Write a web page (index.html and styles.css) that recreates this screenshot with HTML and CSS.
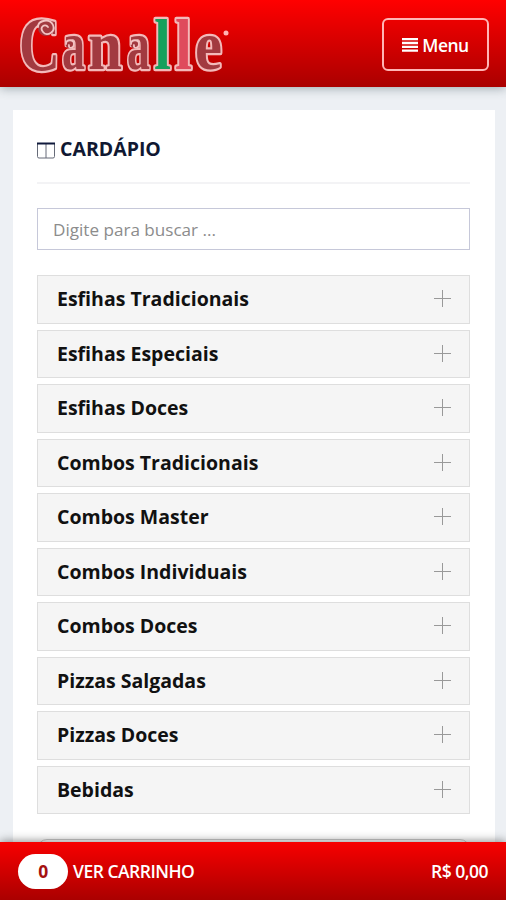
FILE: index.html
```
<!DOCTYPE html>
<html lang="pt-BR">
<head>
    <meta charset="UTF-8">
    <meta name="viewport" content="width=device-width, initial-scale=1.0">
    <title>Canalle - Cardápio</title>
    <link rel="stylesheet" href="styles.css">
</head>
<body>
    <header class="topbar">
        <svg class="logo" width="220" height="87" viewBox="0 0 220 87" role="img" aria-label="Canalle">
            <g class="logo-letters">
                <text x="4" y="70" font-size="77" textLength="41" lengthAdjust="spacingAndGlyphs">C</text>
                <text x="47" y="69" font-size="70" textLength="23" lengthAdjust="spacingAndGlyphs">a</text>
                <text x="73" y="69" font-size="70" textLength="34" lengthAdjust="spacingAndGlyphs">n</text>
                <text x="112" y="69" font-size="70" textLength="23" lengthAdjust="spacingAndGlyphs">a</text>
                <text class="green" x="139" y="69" font-size="71" textLength="17" lengthAdjust="spacingAndGlyphs">l</text>
                <text class="rose" x="160" y="69" font-size="71" textLength="17" lengthAdjust="spacingAndGlyphs">l</text>
                <text x="180" y="69" font-size="70" textLength="27" lengthAdjust="spacingAndGlyphs">e</text>
            </g>
            <!-- curls over the letters -->
            <g fill="none" stroke-linecap="round">
                <g class="curl-base">
                    <circle cx="31" cy="28" r="8"/>
                    <circle cx="55" cy="44" r="4.500"/>
                    <circle cx="120" cy="44" r="4.500"/>
                </g>
                <g class="curl">
                    <path d="M23 27c0-7 12-9 15-2s-6 12-10 7 2-9 5-5"/>
                    <path d="M51 44c0-5 8-5 8 0s-6 5-5 1"/>
                    <path d="M116 44c0-5 8-5 8 0s-6 5-5 1"/>
                </g>
            </g>
            <circle cx="211" cy="33" r="2.500" fill="#ffb3b3"/>
        </svg>
        <button class="menu-btn">
            <svg width="16" height="14" viewBox="0 0 16 14"><path d="M0 1.200h16M0 5h16M0 8.800h16M0 12.600h16" stroke="#fff" stroke-width="2.300"/></svg>
            Menu
        </button>
    </header>

    <main class="card">
        <h1 class="title">
            <svg width="18" height="17" viewBox="0 0 18 17"><path d="M.5 1v13.500q0 1.500 1.500 1.500h14q1.500 0 1.500-1.500V1M9 1v15" fill="none" stroke="#666b78"/><path d="M0 1.500h18" stroke="#101a3c" stroke-width="2"/></svg>
            CARDÁPIO
        </h1>
        <input class="search" type="text" placeholder="Digite para buscar ...">
        <ul class="categories">
            <li>Esfihas Tradicionais</li>
            <li>Esfihas Especiais</li>
            <li>Esfihas Doces</li>
            <li>Combos Tradicionais</li>
            <li>Combos Master</li>
            <li>Combos Individuais</li>
            <li>Combos Doces</li>
            <li>Pizzas Salgadas</li>
            <li>Pizzas Doces</li>
            <li>Bebidas</li>
        </ul>
        <div class="next-box"></div>
    </main>

    <footer class="cart">
        <span class="count">0</span>
        <span>VER CARRINHO</span>
        <span class="total">R$ 0,00</span>
    </footer>
</body>
</html>
```
FILE: styles.css
```
* {
    box-sizing: border-box;
}
body {
    margin: 0;
    height: 900px;
    display: flex;
    flex-direction: column;
    overflow: hidden;
    font-family: "Open Sans", sans-serif;
    background: #edf0f4;
}
.topbar {
    flex: none;
    height: 87px;
    padding: 0 17px 0 15px;
    display: flex;
    align-items: center;
    justify-content: space-between;
    background: linear-gradient(#ff0000, #aa0000);
    box-shadow: 0 1px 10px rgba(50, 70, 80, 0.45);
}
.logo-letters {
    font-family: "Liberation Serif", serif;
    font-weight: bold;
    fill: #a23a40;
    stroke: #f3b9b9;
    stroke-width: 4.5;
    stroke-linejoin: round;
    paint-order: stroke;
}
.green {
    fill: #16a05c;
}
.rose {
    fill: #df4b5c;
}
.curl-base {
    fill: #a23a40;
}
.curl {
    stroke: #f3c4c4;
    stroke-width: 1.8;
}
.menu-btn {
    width: 107px;
    height: 53px;
    margin-top: 2px;
    padding: 0;
    display: flex;
    align-items: center;
    justify-content: center;
    gap: 4px;
    border: 2px solid #ffb5b5;
    border-radius: 6px;
    background: transparent;
    color: #fff;
    font: 600 17.5px "Open Sans", sans-serif;
    letter-spacing: -0.5px;
}
.card {
    flex: 1;
    min-height: 0;
    margin: 23px 11px 0 13px;
    padding: 24px 25px 0 24px;
    overflow: hidden;
    background: #fff;
}
.title {
    height: 50px;
    margin: 0 0 24px;
    padding-top: 2px;
    display: flex;
    align-items: flex-start;
    gap: 5px;
    border-bottom: 2px solid #f3f3f5;
    color: #101832;
    font-size: 19.5px;
    line-height: 26px;
}
.title svg {
    margin-top: 6px;
}
.search {
    display: block;
    width: 100%;
    height: 42px;
    padding: 0 15px;
    border: 1px solid #c6c8d9;
    font: 17.1px "Open Sans", sans-serif;
}
.search::placeholder {
    color: #8c8c8c;
}
.categories {
    margin: 25px 0 0;
    padding: 0;
    display: grid;
    gap: 6px;
    list-style: none;
}
.categories li {
    height: 48.5px;
    padding: 0 18px 1.2px 19px;
    display: flex;
    align-items: center;
    justify-content: space-between;
    border: 1px solid #dedede;
    background: #f5f5f5;
    color: #111;
    font-size: 19.5px;
    font-weight: bold;
}
.categories li::after {
    content: "";
    width: 17px;
    height: 17px;
    background:
        linear-gradient(#999, #999) center / 17px 1px no-repeat,
        linear-gradient(#999, #999) center / 1px 17px no-repeat;
}
.next-box {
    height: 50px;
    margin-top: 25px;
    border: 1px solid #ccc;
    border-radius: 10px;
}
.cart {
    position: relative;
    flex: none;
    height: 58px;
    padding: 0 18px;
    display: flex;
    align-items: center;
    gap: 5px;
    background: linear-gradient(#f80000, #aa0000);
    box-shadow: 0 -1px 9px rgba(0, 0, 0, 0.45);
    color: #fff;
    font-size: 17.5px;
    font-weight: 600;
    letter-spacing: -0.5px;
}
.count {
    width: 50px;
    height: 35px;
    border-radius: 18px;
    background: #fff;
    color: #a51010;
    font-weight: bold;
    line-height: 35px;
    text-align: center;
}
.total {
    margin-left: auto;
}
```
